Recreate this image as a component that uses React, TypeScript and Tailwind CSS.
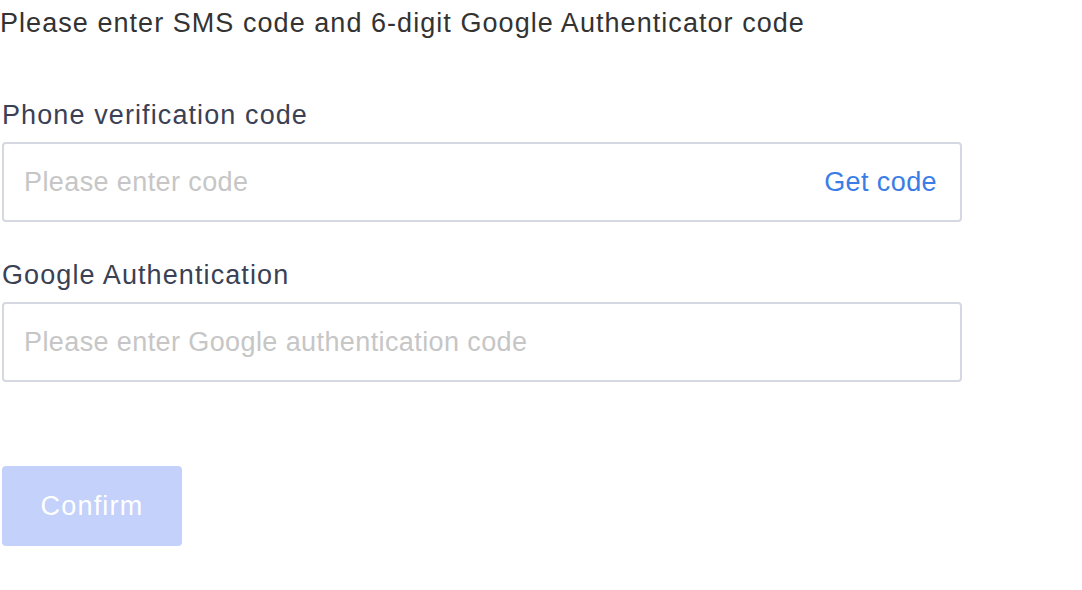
import React from "react";

export default function App() {
  return (
    <div className="w-[1082px] h-[590px] bg-white font-['Liberation_Sans',Arial,sans-serif]">
      <div className="w-[962px] pl-[2px] pt-[5px]">
        <h1 className="text-[27px] leading-[36px] tracking-[1.05px] text-[#333333] -ml-[2px]">
          Please enter SMS code and 6-digit Google Authenticator code
        </h1>
        <div className="mt-[56px]">
          <label className="block text-[27px] leading-[36px] tracking-[1.1px] text-[#3b4154]">
            Phone verification code
          </label>
          <div className="mt-[9px] h-[80px] border-2 border-[#d5d8e2] rounded-[4px] flex items-center pl-[20px] pr-[23px]">
            <input
              className="flex-1 outline-none text-[27px] tracking-[0.4px] text-[#333] placeholder:text-[#c6c6c6] bg-transparent"
              placeholder="Please enter code"
            />
            <span className="text-[27px] tracking-[0.4px] text-[#3b7de6]">Get code</span>
          </div>
        </div>
        <div className="mt-[35px]">
          <label className="block text-[27px] leading-[36px] tracking-[1.1px] text-[#3b4154]">
            Google Authentication
          </label>
          <div className="mt-[9px] h-[80px] border-2 border-[#d5d8e2] rounded-[4px] flex items-center pl-[20px] pr-[23px]">
            <input
              className="flex-1 outline-none text-[27px] tracking-[0.4px] text-[#333] placeholder:text-[#c6c6c6] bg-transparent"
              placeholder="Please enter Google authentication code"
            />
          </div>
        </div>
        <button className="mt-[84px] w-[180px] h-[80px] rounded-[4px] bg-[#c3d1fb] text-white text-[27px] tracking-[1.2px] flex items-center justify-center">
          Confirm
        </button>
      </div>
    </div>
  );
}
